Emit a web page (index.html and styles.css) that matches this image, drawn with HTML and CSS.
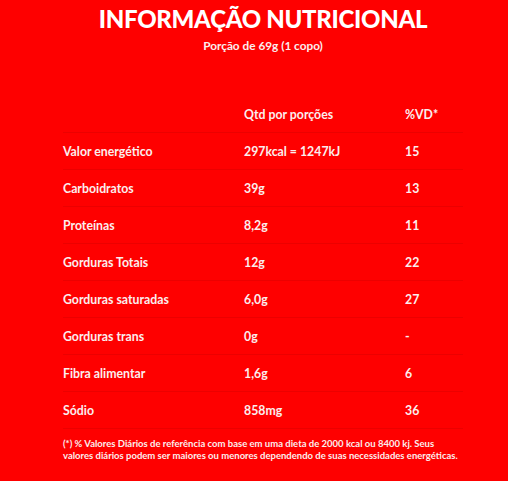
FILE: index.html
```html
<!DOCTYPE html>
<html lang="pt-BR">
<head>
    <meta charset="UTF-8">
    <meta name="viewport" content="width=device-width, initial-scale=1.0">
    <title>Informação Nutricional</title>
    <link rel="stylesheet" href="styles.css">
</head>
<body>
    <div class="panel">
        <div class="header">
            <h1 class="title">INFORMAÇÃO NUTRICIONAL</h1>
            <p class="portion">Porção de 69g (1 copo)</p>
        </div>

        <div class="table">
            <div class="row head">
                <span></span>
                <span>Qtd por porções</span>
                <span>%VD*</span>
            </div>
            <div class="row">
                <span>Valor energético</span>
                <span>297kcal = 1247kJ</span>
                <span>15</span>
            </div>
            <div class="row">
                <span>Carboidratos</span>
                <span>39g</span>
                <span>13</span>
            </div>
            <div class="row">
                <span>Proteínas</span>
                <span>8,2g</span>
                <span>11</span>
            </div>
            <div class="row">
                <span>Gorduras Totais</span>
                <span>12g</span>
                <span>22</span>
            </div>
            <div class="row">
                <span>Gorduras saturadas</span>
                <span>6,0g</span>
                <span>27</span>
            </div>
            <div class="row">
                <span>Gorduras trans</span>
                <span>0g</span>
                <span>-</span>
            </div>
            <div class="row">
                <span>Fibra alimentar</span>
                <span>1,6g</span>
                <span>6</span>
            </div>
            <div class="row">
                <span>Sódio</span>
                <span>858mg</span>
                <span>36</span>
            </div>
        </div>

        <p class="note">(*) % Valores Diários de referência com base em uma dieta de 2000 kcal ou 8400 kj. Seus valores diários podem ser maiores ou menores dependendo de suas necessidades energéticas.</p>
    </div>
</body>
</html>
```

FILE: styles.css
```css
body {
    background-color: #fe0000;
    color: #fbeeee;
    font-family: 'Lato', sans-serif;
    font-weight: bold;
    margin: 0;
}

.panel {
    width: 400px;
    margin-left: 63px;
}

.header {
    text-align: center;
    padding-top: 4px;
}

.title {
    font-size: 24px;
    font-weight: 900;
    line-height: 30px;
    letter-spacing: -0.3px;
    margin: 0;
    color: #ffffff;
    white-space: nowrap;
}

.portion {
    font-size: 11.8px;
    margin: 4px 0 0;
}

.table {
    margin-top: 43px;
}

.row {
    display: grid;
    grid-template-columns: 181px 161px 1fr;
    align-items: center;
    height: 36px;
    border-bottom: 1px solid #ec0000;
    font-size: 12.3px;
}

.note {
    margin: 9px 0 0;
    font-size: 9.5px;
    line-height: 12px;
}
```
